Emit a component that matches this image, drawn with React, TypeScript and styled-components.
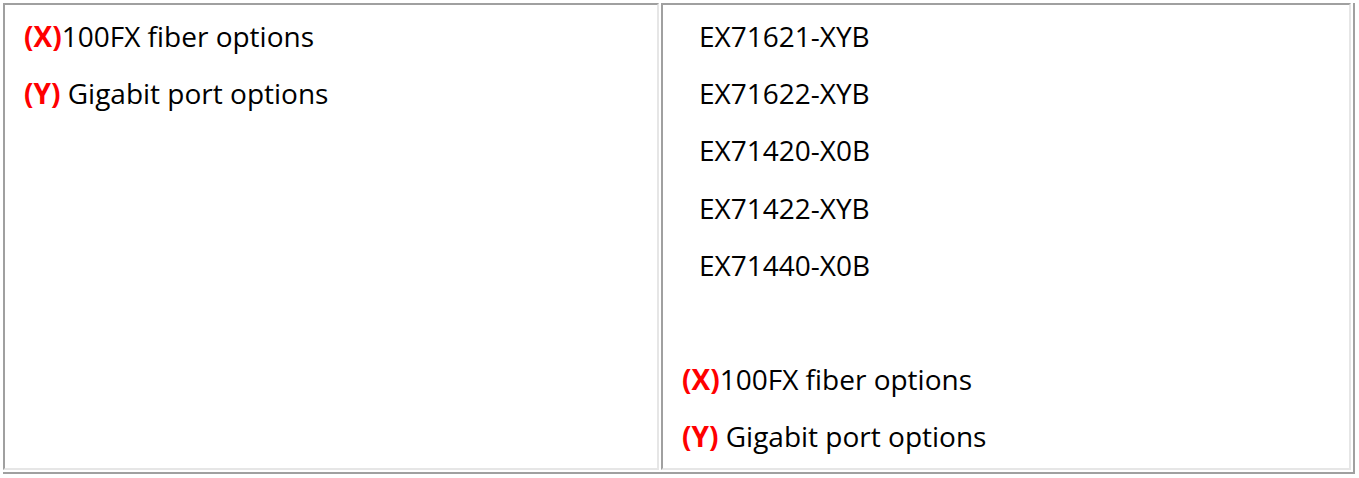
import React from "react";
import styled, { createGlobalStyle } from "styled-components";

const Global = createGlobalStyle`
  html, body { margin: 0; padding: 0; background: #ffffff; }
  body { font-family: "Open Sans", "Liberation Sans", sans-serif; }
`;

const Table = styled.div`
  margin: 3px 0 0 3px;
  width: 1352px;
  box-sizing: border-box;
  display: grid;
  grid-template-columns: 656px 1fr;
  column-gap: 2px;
  padding: 0 2px 2px 0;
  border-right: 2px solid #a0a0a0;
  border-bottom: 2px solid #a0a0a0;
`;

const Cell = styled.div`
  box-sizing: border-box;
  border-top: 2px solid #a0a0a0;
  border-left: 2px solid #a0a0a0;
  border-right: 2px solid #e6e6e6;
  border-bottom: 2px solid #e6e6e6;
  padding: 3px 19px 2px 19px;
`;

const Line = styled.div<{ $indent?: number }>`
  font-size: 28px;
  line-height: 57.2px;
  height: 57.2px;
  color: #000000;
  white-space: pre;
  padding-left: ${(p) => p.$indent ?? 0}px;
`;

const Mark = styled.span`
  color: #ff0000;
  font-weight: 700;
`;

const models = ["EX71621-XYB", "EX71622-XYB", "EX71420-X0B", "EX71422-XYB", "EX71440-X0B"];

const Legend = () => (
  <>
    <Line>
      <Mark>(X)</Mark>100FX fiber options
    </Line>
    <Line>
      <Mark>(Y)</Mark> Gigabit port options
    </Line>
  </>
);

export default function App() {
  return (
    <>
      <Global />
      <Table>
        <Cell>
          <Legend />
        </Cell>
        <Cell>
          {models.map((m) => (
            <Line key={m} $indent={17}>
              {m}
            </Line>
          ))}
          <Line />
          <Legend />
        </Cell>
      </Table>
    </>
  );
}
